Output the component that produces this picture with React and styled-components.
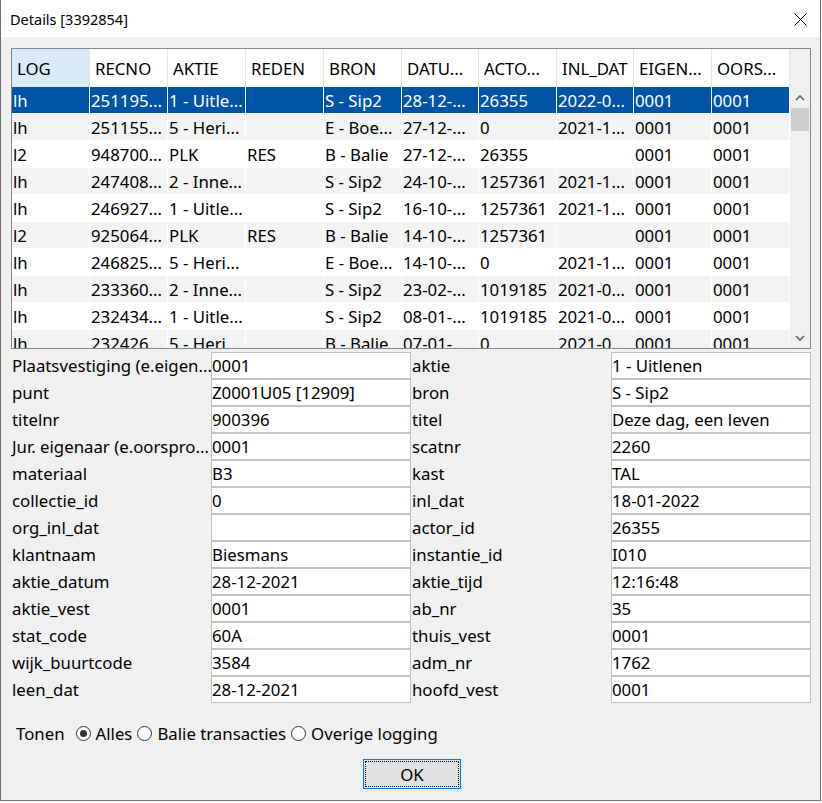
import React from 'react';
import styled, { createGlobalStyle } from 'styled-components';

const GlobalStyle = createGlobalStyle`
  html, body {
    margin: 0;
    padding: 0;
    background: #ffffff;
  }
  * {
    box-sizing: border-box;
  }
`;

const FONT = `"Noto Sans", "Open Sans", sans-serif`;

const columns = [
  { title: 'LOG', width: 78 },
  { title: 'RECNO', width: 78 },
  { title: 'AKTIE', width: 78 },
  { title: 'REDEN', width: 78 },
  { title: 'BRON', width: 78 },
  { title: 'DATU...', width: 77 },
  { title: 'ACTO...', width: 78 },
  { title: 'INL_DAT', width: 77 },
  { title: 'EIGEN...', width: 78 },
  { title: 'OORS...', width: 78 },
];

const rows = [
  ['lh', '251195...', '1 - Uitle...', '', 'S - Sip2', '28-12-...', '26355', '2022-0...', '0001', '0001'],
  ['lh', '251155...', '5 - Heri...', '', 'E - Boe...', '27-12-...', '0', '2021-1...', '0001', '0001'],
  ['l2', '948700...', 'PLK', 'RES', 'B - Balie', '27-12-...', '26355', '', '0001', '0001'],
  ['lh', '247408...', '2 - Inne...', '', 'S - Sip2', '24-10-...', '1257361', '2021-1...', '0001', '0001'],
  ['lh', '246927...', '1 - Uitle...', '', 'S - Sip2', '16-10-...', '1257361', '2021-1...', '0001', '0001'],
  ['l2', '925064...', 'PLK', 'RES', 'B - Balie', '14-10-...', '1257361', '', '0001', '0001'],
  ['lh', '246825...', '5 - Heri...', '', 'E - Boe...', '14-10-...', '0', '2021-1...', '0001', '0001'],
  ['lh', '233360...', '2 - Inne...', '', 'S - Sip2', '23-02-...', '1019185', '2021-0...', '0001', '0001'],
  ['lh', '232434...', '1 - Uitle...', '', 'S - Sip2', '08-01-...', '1019185', '2021-0...', '0001', '0001'],
  ['lh', '232426...', '5 - Heri...', '', 'B - Balie', '07-01-...', '0', '2021-0...', '0001', '0001'],
];

const fields = [
  ['Plaatsvestiging (e.eigen...', '0001', 'aktie', '1 - Uitlenen'],
  ['punt', 'Z0001U05 [12909]', 'bron', 'S - Sip2'],
  ['titelnr', '900396', 'titel', 'Deze dag, een leven'],
  ['Jur. eigenaar (e.oorspro...', '0001', 'scatnr', '2260'],
  ['materiaal', 'B3', 'kast', 'TAL'],
  ['collectie_id', '0', 'inl_dat', '18-01-2022'],
  ['org_inl_dat', '', 'actor_id', '26355'],
  ['klantnaam', 'Biesmans', 'instantie_id', 'I010'],
  ['aktie_datum', '28-12-2021', 'aktie_tijd', '12:16:48'],
  ['aktie_vest', '0001', 'ab_nr', '35'],
  ['stat_code', '60A', 'thuis_vest', '0001'],
  ['wijk_buurtcode', '3584', 'adm_nr', '1762'],
  ['leen_dat', '28-12-2021', 'hoofd_vest', '0001'],
];

export default function App() {
  return (
    <>
      <GlobalStyle />
      <Window>
        <TitleBar>
          <TitleText>Details [3392854]</TitleText>
          <CloseIcon viewBox="0 0 13 13" width="13" height="13">
            <path d="M0.5 0.5 L12.5 12.5 M12.5 0.5 L0.5 12.5" stroke="#000" strokeWidth="1" fill="none" />
          </CloseIcon>
        </TitleBar>

        <Body>
          <Grid>
            <HeaderRow>
              {columns.map((c, i) => (
                <HeaderCell key={c.title} $width={c.width} $active={i === 0}>
                  {c.title}
                </HeaderCell>
              ))}
            </HeaderRow>
            <HeaderFiller />
            <RowsArea>
              {rows.map((r, ri) => (
                <Row key={ri} $selected={ri === 0} $odd={ri % 2 === 1}>
                  {r.map((v, ci) => (
                    <Cell key={ci} $width={columns[ci].width}>
                      {v}
                    </Cell>
                  ))}
                </Row>
              ))}
            </RowsArea>
            <ScrollBar>
              <ArrowButton>
                <svg width="10" height="6" viewBox="0 0 10 6">
                  <path d="M1 5 L5 1 L9 5" stroke="#606060" strokeWidth="1.6" fill="none" />
                </svg>
              </ArrowButton>
              <Thumb />
              <ScrollSpace />
              <ArrowButton>
                <svg width="10" height="6" viewBox="0 0 10 6">
                  <path d="M1 1 L5 5 L9 1" stroke="#606060" strokeWidth="1.6" fill="none" />
                </svg>
              </ArrowButton>
            </ScrollBar>
          </Grid>

          <Form>
            {fields.map(([l1, v1, l2, v2]) => (
              <React.Fragment key={l1}>
                <FieldLabel>{l1}</FieldLabel>
                <FieldBox>{v1}</FieldBox>
                <FieldLabel>{l2}</FieldLabel>
                <FieldBox>{v2}</FieldBox>
              </React.Fragment>
            ))}
          </Form>

          <RadioRow>
            <RadioCaption>Tonen</RadioCaption>
            <RadioOption>
              <RadioCircle $checked />
              Alles
            </RadioOption>
            <RadioOption>
              <RadioCircle />
              Balie transacties
            </RadioOption>
            <RadioOption>
              <RadioCircle />
              Overige logging
            </RadioOption>
          </RadioRow>

          <ButtonRow>
            <OkButton type="button">OK</OkButton>
          </ButtonRow>
        </Body>
      </Window>
    </>
  );
}

const Window = styled.div`
  width: 821px;
  height: 801px;
  background: #f0f0f0;
  border-left: 1px solid #6e6e6e;
  border-right: 1px solid #6e6e6e;
  border-bottom: 1px solid #6e6e6e;
  display: flex;
  flex-direction: column;
  font-family: ${FONT};
  font-size: 16.8px;
  color: #000;
`;

const TitleBar = styled.div`
  height: 37px;
  background: #ffffff;
  display: flex;
  align-items: center;
  justify-content: space-between;
  padding: 0 13px 0 9px;
`;

const TitleText = styled.span`
  font-size: 14.5px;
`;

const CloseIcon = styled.svg`
  display: block;
  margin-top: 2px;
`;

const Body = styled.div`
  display: flex;
  flex-direction: column;
  padding: 11px 0 0 10px;
`;

const Grid = styled.div`
  width: 800px;
  height: 301px;
  border: 1px solid #828790;
  background: #ffffff;
  display: grid;
  grid-template-columns: 778px 20px;
  grid-template-rows: 38px 1fr;
  overflow: hidden;
`;

const HeaderRow = styled.div`
  display: flex;
  background: #ffffff;
`;

const HeaderCell = styled.div`
  width: ${(p) => p.$width}px;
  flex: none;
  display: flex;
  align-items: center;
  padding-left: 5px;
  background: ${(p) => (p.$active ? '#d9ebf9' : '#ffffff')};
  border-right: 1px solid #e5e5e5;
  white-space: nowrap;
  overflow: hidden;
`;

const HeaderFiller = styled.div`
  background: #f0f0f0;
`;

const RowsArea = styled.div`
  overflow: hidden;
  background: #ffffff;
`;

const Row = styled.div`
  display: flex;
  height: 27px;
  border-bottom: 1px solid #ffffff;
  background: ${(p) => (p.$selected ? '#0054a6' : p.$odd ? '#f3f3f3' : '#ffffff')};
  color: ${(p) => (p.$selected ? '#ffffff' : '#000000')};
`;

const Cell = styled.div`
  width: ${(p) => p.$width}px;
  flex: none;
  display: flex;
  align-items: center;
  padding-left: 1px;
  border-right: 1px solid #ffffff;
  white-space: nowrap;
  overflow: hidden;
`;

const ScrollBar = styled.div`
  background: #f0f0f0;
  display: flex;
  flex-direction: column;
`;

const ArrowButton = styled.div`
  height: 21px;
  display: flex;
  align-items: center;
  justify-content: center;
  flex: none;
`;

const Thumb = styled.div`
  height: 23px;
  margin: 0 1px;
  background: #cdcdcd;
  flex: none;
`;

const ScrollSpace = styled.div`
  flex: 1;
`;

const Form = styled.div`
  margin-top: 3px;
  width: 800px;
  display: grid;
  grid-template-columns: 200px 200px 200px 200px;
  grid-auto-rows: 27px;
`;

const FieldLabel = styled.div`
  display: flex;
  align-items: center;
  padding-left: 1px;
  white-space: nowrap;
  overflow: hidden;
`;

const FieldBox = styled.div`
  display: flex;
  align-items: center;
  background: #ffffff;
  border: 1px solid #c2c2c2;
  padding-left: 0;
  white-space: nowrap;
  overflow: hidden;
`;

const RadioRow = styled.div`
  margin-top: 17px;
  height: 26px;
  display: flex;
  align-items: center;
  padding-left: 5px;
`;

const RadioCaption = styled.span`
  margin-right: 11px;
`;

const RadioOption = styled.label`
  display: flex;
  align-items: center;
  gap: 5px;
  margin-right: 5px;
`;

const RadioCircle = styled.span`
  width: 15px;
  height: 15px;
  border-radius: 50%;
  border: 1px solid #333333;
  background: #ffffff;
  position: relative;
  flex: none;

  &::after {
    content: '';
    display: ${(p) => (p.$checked ? 'block' : 'none')};
    position: absolute;
    left: 3px;
    top: 3px;
    width: 7px;
    height: 7px;
    border-radius: 50%;
    background: #333333;
  }
`;

const ButtonRow = styled.div`
  margin-top: 13px;
  width: 800px;
  display: flex;
  justify-content: center;
`;

const OkButton = styled.button`
  width: 98px;
  height: 30px;
  margin-left: 2px;
  border: 1px solid #0078d7;
  background: #e1e1e1;
  font-family: ${FONT};
  font-size: 16.8px;
  color: #000;
  position: relative;
  padding: 0;

  &::after {
    content: '';
    position: absolute;
    inset: 1px;
    border: 1px dotted #000;
  }
`;
